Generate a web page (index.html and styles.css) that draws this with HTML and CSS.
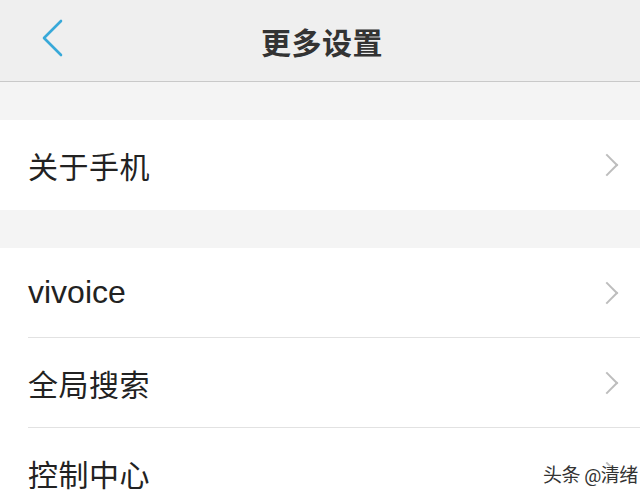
FILE: index.html
```html
<!DOCTYPE html>
<html lang="zh-CN">
<head>
    <meta charset="UTF-8">
    <meta name="viewport" content="width=device-width, initial-scale=1.0">
    <title>更多设置</title>
    <link rel="stylesheet" href="styles.css">
</head>
<body>
    <div class="topbar">
        <button class="back" aria-label="返回">
            <svg width="24" height="38" viewBox="0 0 24 38">
                <polyline points="21,2 4,19 21,36" fill="none" stroke="#38a9d9" stroke-width="2.6" stroke-linecap="round" stroke-linejoin="round"/>
            </svg>
        </button>
        <h1>更多设置</h1>
    </div>

    <div class="gap"></div>
    <div class="group">
        <div class="row"><span>关于手机</span><i class="arrow"></i></div>
    </div>

    <div class="gap"></div>
    <div class="group">
        <div class="row"><span class="latin">vivoice</span><i class="arrow"></i></div>
        <div class="row"><span>全局搜索</span><i class="arrow"></i></div>
        <div class="row"><span>控制中心</span><i class="arrow"></i></div>
    </div>

    <div class="watermark">头条 @清绪</div>
</body>
</html>
```

FILE: styles.css
```css
body {
    margin: 0;
    background: #f4f4f4;
    font-family: Roboto, "Noto Sans CJK SC", sans-serif;
    color: #222;
    overflow: hidden;
}
.topbar {
    height: 81px;
    background: #efefef;
    border-bottom: 1px solid #c9c9c9;
    display: flex;
    align-items: center;
    justify-content: center;
    position: relative;
}
.topbar h1 {
    margin: 0 0 0 4px;
    font-size: 30px;
    font-weight: 700;
    color: #333;
    letter-spacing: 0.5px;
}
.back {
    position: absolute;
    left: 40px;
    top: 19px;
    padding: 0;
    border: none;
    background: none;
}
.back svg {
    display: block;
}
.gap {
    height: 38px;
}
.group {
    background: #fff;
}
.row {
    height: 90px;
    margin-left: 28px;
    padding-right: 22px;
    display: flex;
    align-items: center;
    justify-content: space-between;
    font-size: 30px;
    letter-spacing: 0.5px;
    border-bottom: 1px solid #e2e2e2;
    box-sizing: border-box;
}
.row:last-child {
    border-bottom: none;
}
.row .latin {
    font-size: 32px;
    letter-spacing: 0;
    font-family: "Liberation Sans", sans-serif;
}
.arrow {
    width: 14px;
    height: 14px;
    border-top: 2px solid #bdbdbd;
    border-right: 2px solid #bdbdbd;
    transform: rotate(45deg);
    margin-right: 3px;
}
.watermark {
    position: absolute;
    left: 543px;
    top: 460px;
    font-size: 19px;
    color: #333;
    text-shadow: 0 0 2px #fff, 0 0 2px #fff;
    letter-spacing: -0.5px;
}
```
